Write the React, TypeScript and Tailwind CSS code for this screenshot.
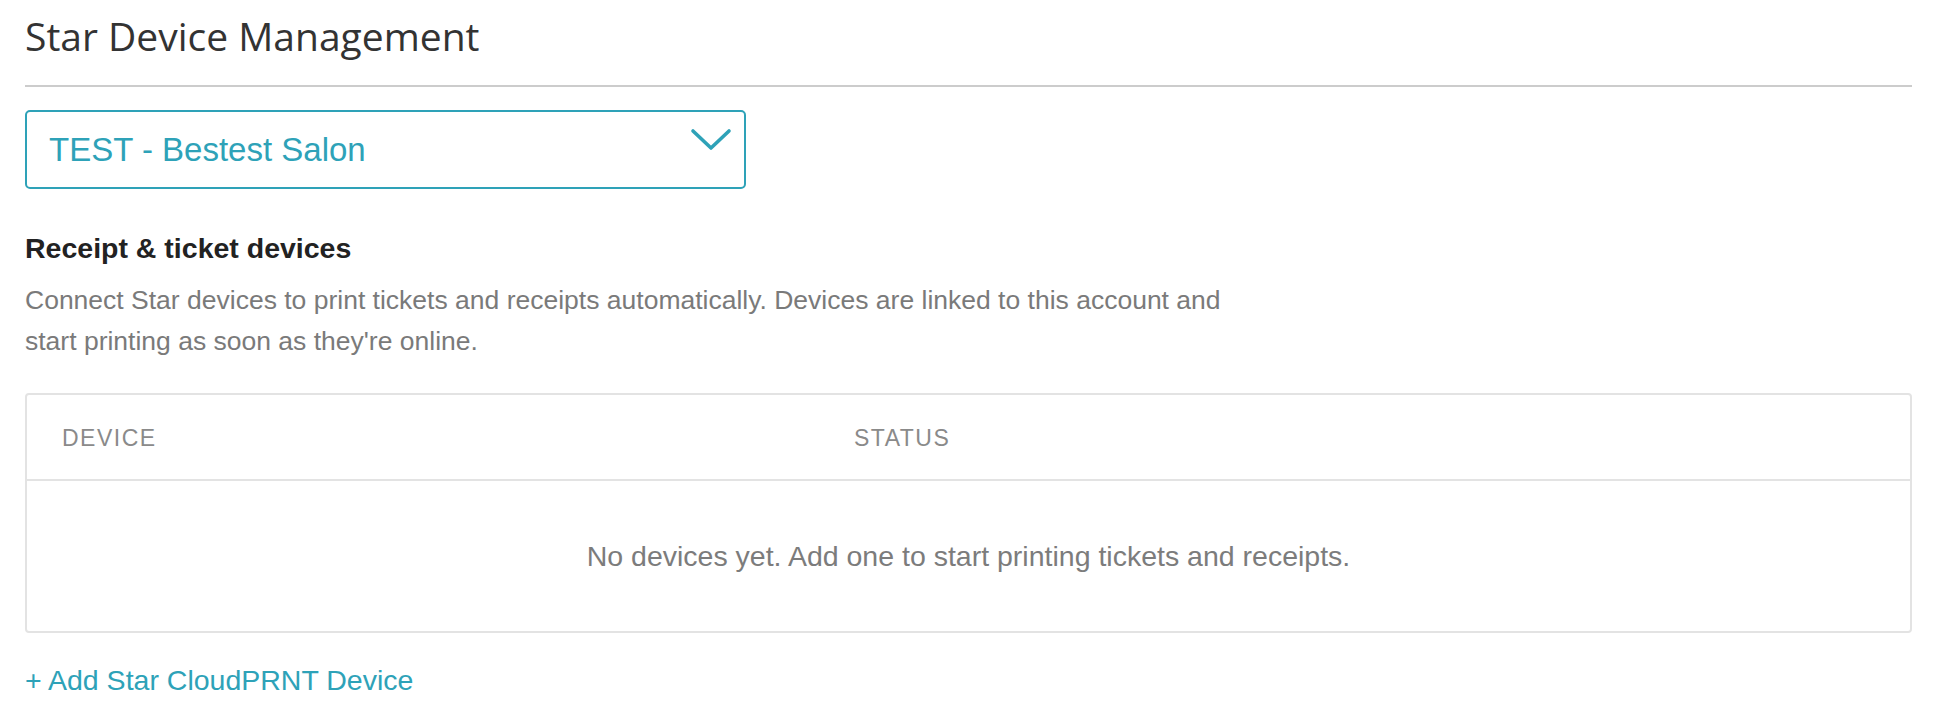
const teal = "text-[#2ea2b8]";

function Chevron() {
  return (
    <svg width="42" height="24" viewBox="0 0 42 24" fill="none" className="mt-[16px] shrink-0 self-start">
      <path d="M3 3 L21 20 L39 3" stroke="#2ea2b8" strokeWidth="3.6" strokeLinecap="round" strokeLinejoin="round" />
    </svg>
  );
}

export default function App() {
  return (
    <div className="min-h-screen bg-white px-[25px] pt-[13px] font-['Liberation_Sans',Arial,sans-serif]">
      <h1 className="font-['Open_Sans',sans-serif] text-[39px] leading-[45px] text-[#333]">Star Device Management</h1>
      <div className="mt-[27px] h-[2px] bg-[#cccccc]" />

      <button
        type="button"
        className="mt-[23px] flex h-[79px] w-[721px] items-center justify-between rounded-[5px] border-2 border-[#2ea2b8] pl-[22px] pr-[12px] text-left"
      >
        <span className={`text-[33px] ${teal}`}>TEST - Bestest Salon</span>
        <Chevron />
      </button>

      <h2 className="mt-[43px] text-[28.5px] font-bold leading-[32px] text-[#222]">Receipt &amp; ticket devices</h2>
      <p className="mt-[16px] max-w-[1240px] text-[26.5px] leading-[41px] text-[#7a7a7a]">
        Connect Star devices to print tickets and receipts automatically. Devices are linked to this account and
        start printing as soon as they're online.
      </p>

      <div className="mt-[31px] rounded-[4px] border-2 border-[#e3e3e3]">
        <div className="grid h-[86px] grid-cols-[792px_1fr] items-center border-b-2 border-[#e3e3e3] px-[35px] pt-[3px] text-[23px] tracking-[1.5px] text-[#8a8a8a]">
          <span>DEVICE</span>
          <span>STATUS</span>
        </div>
        <div className="flex h-[150px] items-center justify-center text-[28.5px] text-[#7c7c7c]">
          No devices yet. Add one to start printing tickets and receipts.
        </div>
      </div>

      <a href="#" className={`mt-[31px] inline-block text-[28.5px] leading-[32px] ${teal}`}>
        + Add Star CloudPRNT Device
      </a>
    </div>
  );
}
